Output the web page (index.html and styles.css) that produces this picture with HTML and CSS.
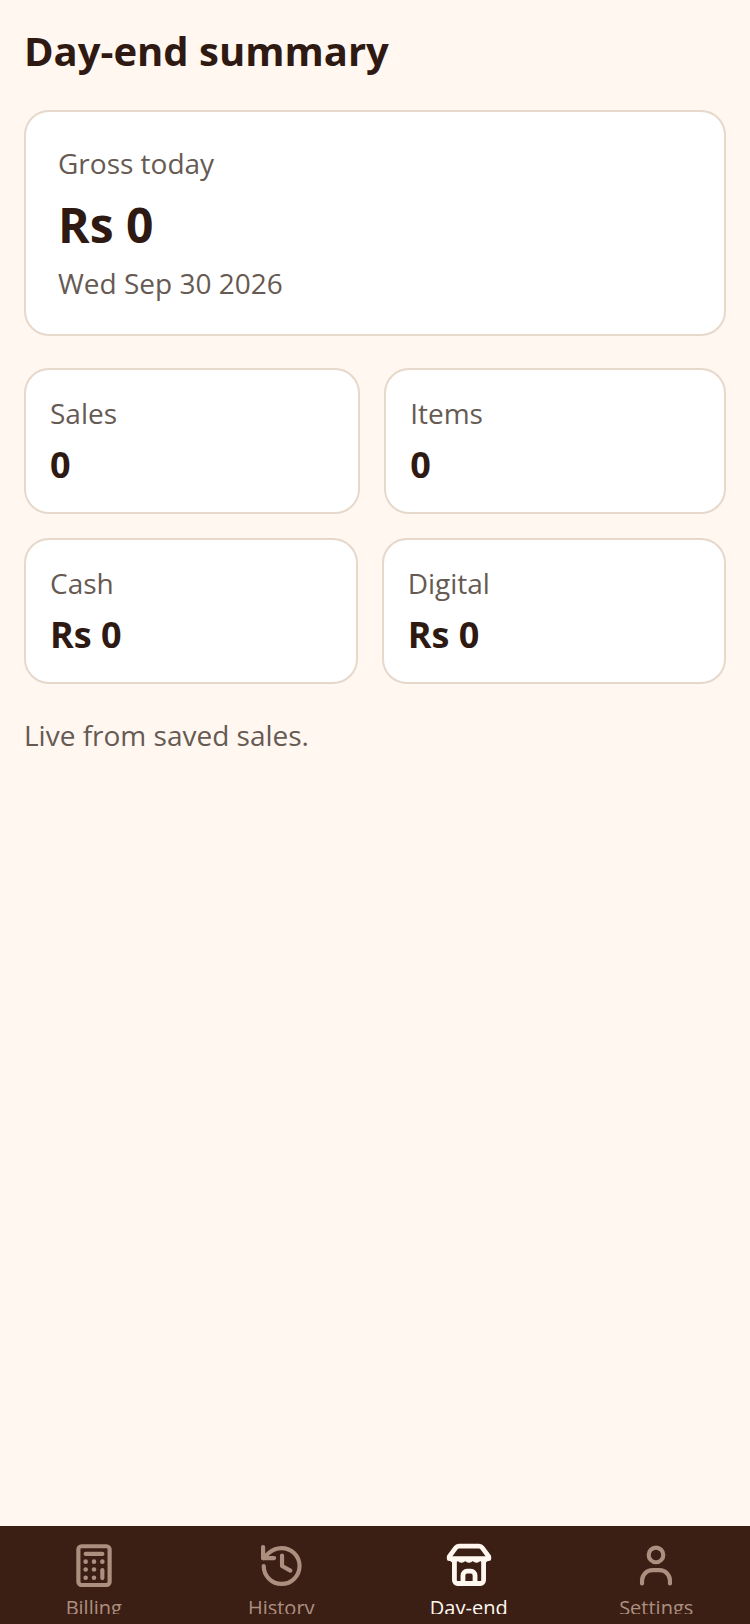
FILE: index.html
```html
<!DOCTYPE html>
<html lang="en">
    <head>
        <meta charset="utf-8">
        <title>Day-end summary</title>
        <meta name="viewport" content="width=device-width, initial-scale=1.0">
        <link rel="stylesheet" href="styles.css">
    </head>
    <body>
        <main class="content">
            <h1 class="title">Day-end summary</h1>

            <section class="card hero">
                <p class="label">Gross today</p>
                <p class="heroValue">Rs 0</p>
                <p class="label">Wed Sep 30 2026</p>
            </section>

            <div class="row">
                <section class="card stat">
                    <p class="label">Sales</p>
                    <p class="value">0</p>
                </section>
                <section class="card stat">
                    <p class="label">Items</p>
                    <p class="value">0</p>
                </section>
            </div>

            <div class="row">
                <section class="card stat">
                    <p class="label">Cash</p>
                    <p class="value">Rs 0</p>
                </section>
                <section class="card stat">
                    <p class="label">Digital</p>
                    <p class="value">Rs 0</p>
                </section>
            </div>

            <p class="label note">Live from saved sales.</p>
        </main>

        <nav class="tabbar">
            <a class="tab">
                <svg class="icon" viewBox="0 0 24 24"><rect x="4.5" y="2.5" width="15" height="18.600" rx="1.5"/><path d="M8 6.200h8"/><path d="M16 14v3.800"/><g class="solid"><circle cx="8" cy="9.900" r="1.100"/><circle cx="12" cy="9.900" r="1.100"/><circle cx="16" cy="9.900" r="1.100"/><circle cx="8" cy="13.700" r="1.100"/><circle cx="12" cy="13.700" r="1.100"/><circle cx="8" cy="17.600" r="1.100"/><circle cx="12" cy="17.600" r="1.100"/></g></svg>
                <span class="tabLabel">Billing</span>
            </a>
            <a class="tab">
                <svg class="icon" viewBox="0 0 24 24"><path d="M3.700 12a8.600 8.600 0 1 0 8.600-8.600 9.300 9.300 0 0 0-6.450 2.620L3.400 8.200"/><path d="M3.400 2.900v5.300h5.300"/><path d="M12.500 7v5l4 2.200"/></svg>
                <span class="tabLabel">History</span>
            </a>
            <a class="tab active">
                <svg class="icon boldIcon" viewBox="0 0 24 24"><path d="M7.200 2.500h9.600a2 2 0 0 1 1.600.8l3.100 4.200v1H2.500v-1l3.100-4.200a2 2 0 0 1 1.600-.8z"/><path class="solid thin" d="M3 8.500h18v.8q-1.800 1.700-3.600 0q-1.800 1.700-3.600 0q-1.800 1.700-3.600 0q-1.800 1.700-3.600 0q-1.800 1.700-3.600 0z"/><path d="M5 10v8.900a1.500 1.500 0 0 0 1.500 1.500h11a1.500 1.500 0 0 0 1.500-1.500V10"/><path d="M9.100 20.400v-3.900a2 2 0 0 1 2-2h1.800a2 2 0 0 1 2 2v3.900"/></svg>
                <span class="tabLabel">Day-end</span>
            </a>
            <a class="tab">
                <svg class="icon" viewBox="0 0 24 24"><circle cx="12" cy="6.700" r="3.500"/><path d="M5.300 20.400V19a5 5 0 0 1 5-5h3.400a5 5 0 0 1 5 5v1.400"/></svg>
                <span class="tabLabel">Settings</span>
            </a>
        </nav>
    </body>
</html>
```

FILE: styles.css
```css
* {
    margin: 0;
    padding: 0;
    box-sizing: border-box;
}

html, body {
    height: 100%;
}

body {
    display: flex;
    flex-direction: column;
    background-color: #fff7f0;
    color: #2e1a12;
    font-family: "Open Sans", "Noto Sans", sans-serif;
}

.content {
    flex: 1;
    padding: 24px;
}

.title {
    font-size: 40px;
    line-height: 54px;
    font-weight: 700;
    margin-bottom: 32px;
}

.card {
    background-color: #ffffff;
    border: 2px solid #e6d8cb;
    border-radius: 25px;
}

.hero {
    padding: 32px 32px;
    height: 226px;
    margin-bottom: 32px;
}

.row {
    display: flex;
    gap: 24px;
    margin-bottom: 24px;
}

.stat {
    flex: 1 1 auto;
    height: 146px;
    padding: 24px 24px;
}

.label {
    font-size: 28px;
    line-height: 38px;
    color: #665a53;
}

.heroValue {
    font-size: 48px;
    line-height: 66px;
    font-weight: 700;
    margin: 10px 0 6px;
}

.value {
    font-size: 36px;
    line-height: 48px;
    font-weight: 700;
    margin-top: 9px;
}

.row + .note {
    margin-top: 32px;
}

.tabbar {
    display: flex;
    height: 98px;
    flex-shrink: 0;
    background-color: #3b1f14;
    padding-top: 15px;
}

.tab {
    flex: 1;
    display: flex;
    flex-direction: column;
    align-items: center;
    color: #ad8f80;
}

.tab.active {
    color: #fff7f0;
}

.icon {
    width: 50px;
    height: 50px;
    flex-shrink: 0;
    fill: none;
    stroke: currentColor;
    stroke-width: 2;
    stroke-linecap: round;
    stroke-linejoin: round;
}

.boldIcon {
    stroke-width: 2.3;
}

.icon .solid {
    fill: currentColor;
    stroke: none;
}

.icon .thin {
    stroke: currentColor;
    stroke-width: 0.6;
}

/* the label really is cut off by the bar in the design */
.tabLabel {
    display: block;
    height: 20px;
    margin-top: 3px;
    overflow: hidden;
    font-size: 20px;
    line-height: 28px;
}
```
